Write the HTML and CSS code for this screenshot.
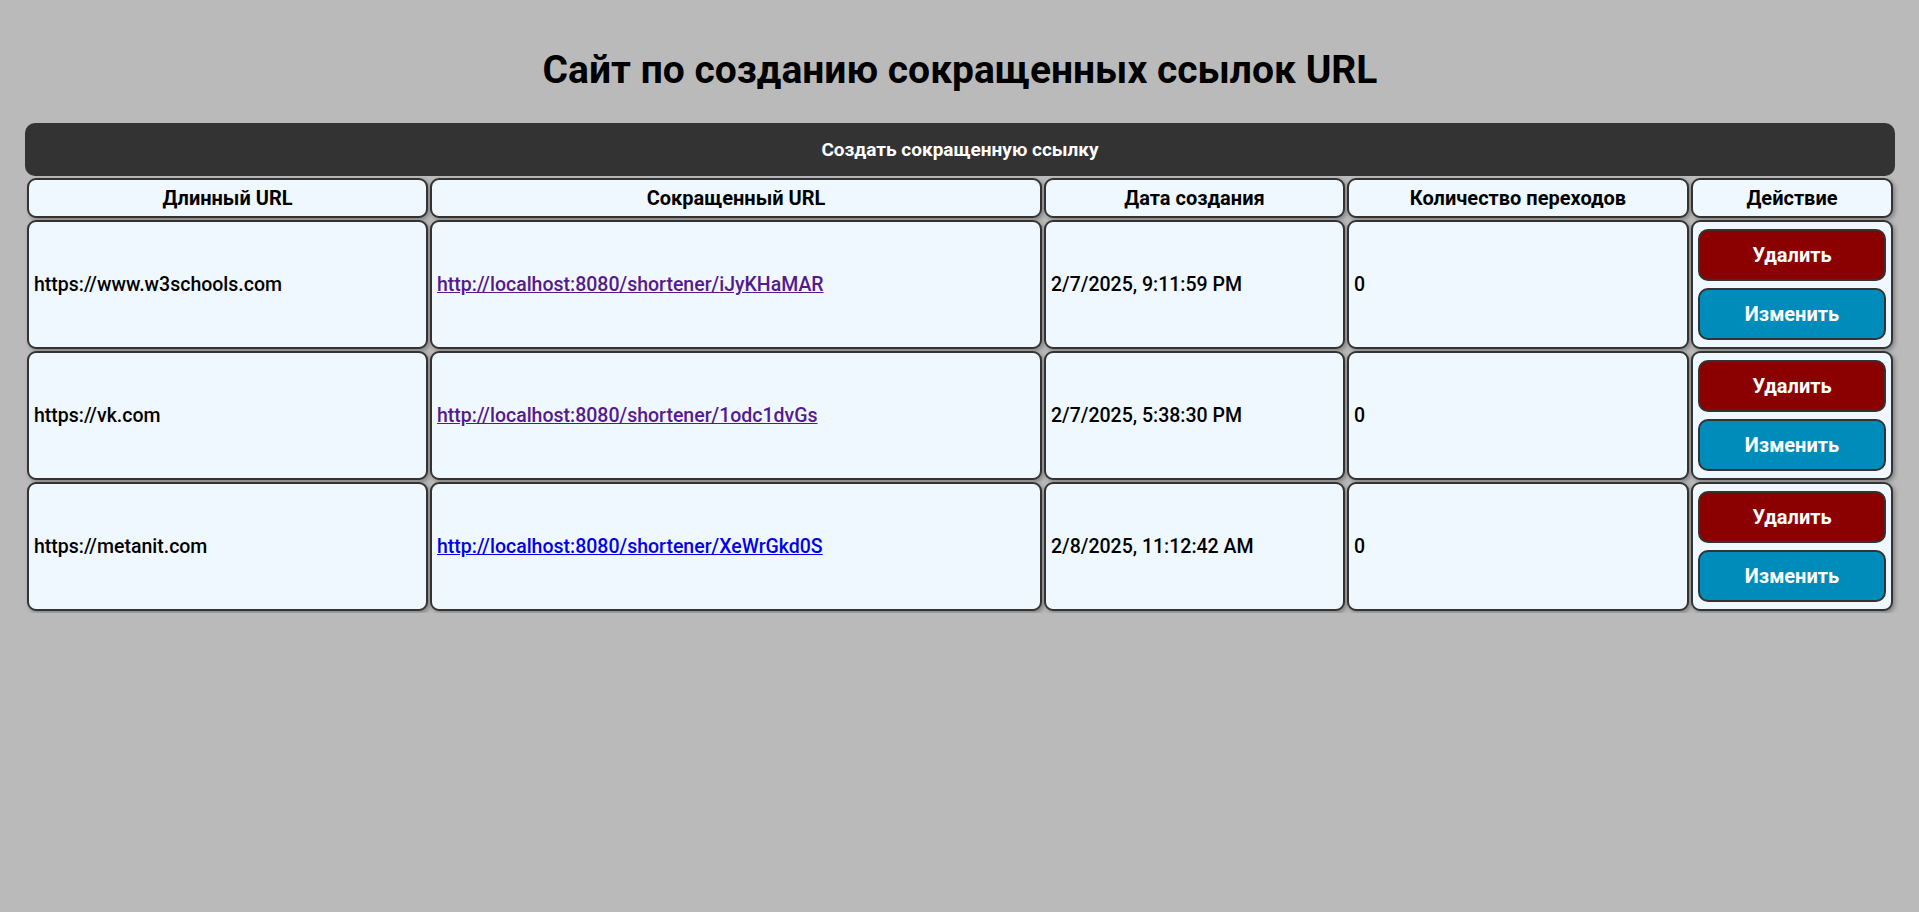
FILE: index.html
```html
<!DOCTYPE html>
<html lang="ru">
<head>
<meta charset="utf-8">
<title>Сокращение ссылок</title>
<link rel="stylesheet" href="styles.css">
</head>
<body>
<main class="page">
  <h1 class="title">Сайт по созданию сокращенных ссылок URL</h1>
  <table class="links">
    <caption class="create-bar">Создать сокращенную ссылку</caption>
    <colgroup>
      <col class="c-long">
      <col class="c-short">
      <col class="c-date">
      <col class="c-count">
      <col class="c-action">
    </colgroup>
    <thead>
      <tr>
        <th>Длинный URL</th>
        <th>Сокращенный URL</th>
        <th>Дата создания</th>
        <th>Количество переходов</th>
        <th>Действие</th>
      </tr>
    </thead>
    <tbody>
      <tr>
        <td>https://www.w3schools.com</td>
        <td><a class="visited" href="#">http://localhost:8080/shortener/iJyKHaMAR</a></td>
        <td>2/7/2025, 9:11:59 PM</td>
        <td>0</td>
        <td class="actions"><button class="btn btn-delete">Удалить</button><button class="btn btn-edit">Изменить</button></td>
      </tr>
      <tr>
        <td>https://vk.com</td>
        <td><a class="visited" href="#">http://localhost:8080/shortener/1odc1dvGs</a></td>
        <td>2/7/2025, 5:38:30 PM</td>
        <td>0</td>
        <td class="actions"><button class="btn btn-delete">Удалить</button><button class="btn btn-edit">Изменить</button></td>
      </tr>
      <tr>
        <td>https://metanit.com</td>
        <td><a class="fresh" href="#">http://localhost:8080/shortener/XeWrGkd0S</a></td>
        <td>2/8/2025, 11:12:42 AM</td>
        <td>0</td>
        <td class="actions"><button class="btn btn-delete">Удалить</button><button class="btn btn-edit">Изменить</button></td>
      </tr>
    </tbody>
  </table>
</main>
</body>
</html>
```
FILE: styles.css
```css
html, body {
  margin: 0;
  padding: 0;
  background: #bababa;
}

body {
  font-family: Roboto, "Liberation Sans", Arial, sans-serif;
  color: #000;
}

.page {
  padding: 48px 24px 0 25px;
}

.title {
  margin: 0 0 31px;
  text-align: center;
  font-size: 39px;
  line-height: 44px;
  font-weight: 700;
}

.links {
  width: 100%;
  table-layout: fixed;
  border-collapse: separate;
  border-spacing: 2px;
}

.create-bar {
  background: #333333;
  color: #ffffff;
  font-weight: 700;
  font-size: 19px;
  height: 53px;
  line-height: 53px;
  border-radius: 10px;
  text-align: center;
}

.c-long { width: 401px; }
.c-short { width: 612px; }
.c-date { width: 301px; }
.c-count { width: 342px; }

.links th,
.links td {
  background: #f0f8ff;
  border: 2px solid #333333;
  border-radius: 9px;
  box-shadow: 2px 2px 4px rgba(0, 0, 0, 0.3);
  padding: 5px;
}

.links th {
  height: 40px;
  box-sizing: border-box;
  padding: 0 5px;
  font-size: 20px;
  font-weight: 700;
  text-align: center;
}

.links td {
  height: 129px;
  box-sizing: border-box;
  text-align: left;
  font-size: 19.5px;
  font-weight: 500;
}

.links a {
  text-decoration: underline;
}

.links a.visited { color: #551a8b; }
.links a.fresh { color: #0000ee; }

.actions {
  padding: 6px 6px 5px 5px;
}

.btn {
  display: block;
  width: 100%;
  height: 52px;
  border: 2px solid #333333;
  border-radius: 10px;
  color: #ffffff;
  font-family: inherit;
  font-size: 20px;
  font-weight: 700;
  cursor: pointer;
}

.btn + .btn {
  margin-top: 7px;
}

.btn-delete { background: #8b0000; }
.btn-edit { background: #008cba; }
```
